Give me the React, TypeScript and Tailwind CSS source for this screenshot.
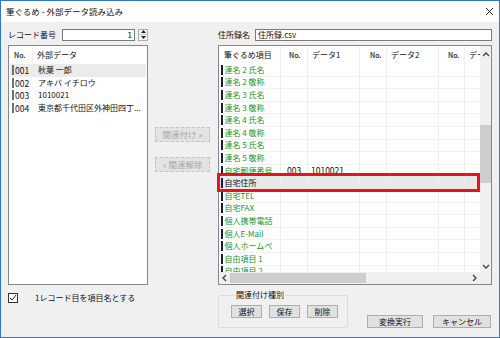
import React from 'react';

// 筆ぐるめ - 外部データ読み込み dialog

type Row = { name: string; no?: string; data?: string; selected?: boolean };

const LEFT_ROWS = [
  { no: '001', text: '秋葉 一郎', selected: true },
  { no: '002', text: 'アキバ イチロウ' },
  { no: '003', text: '1010021' },
  { no: '004', text: '東京都千代田区外神田四丁...' },
];

const RIGHT_ROWS: Row[] = [
  { name: '連名 2 氏名' },
  { name: '連名 2 敬称' },
  { name: '連名 3 氏名' },
  { name: '連名 3 敬称' },
  { name: '連名 4 氏名' },
  { name: '連名 4 敬称' },
  { name: '連名 5 氏名' },
  { name: '連名 5 敬称' },
  { name: '自宅郵便番号', no: '003', data: '1010021' },
  { name: '自宅住所', selected: true },
  { name: '自宅TEL' },
  { name: '自宅FAX' },
  { name: '個人携帯電話' },
  { name: '個人E-Mail' },
  { name: '個人ホームペ' },
  { name: '自由項目 1' },
  { name: '自由項目 2' },
];

function Chevron({ dir }: { dir: 'up' | 'down' | 'left' | 'right' }) {
  const pts = {
    up: '1,5 4,2 7,5',
    down: '1,2 4,5 7,2',
    left: '5,1 2,4 5,7',
    right: '2,1 5,4 2,7',
  }[dir];
  return (
    <svg width="8" height="8" viewBox="0 0 8 8">
      <polyline points={pts} fill="none" stroke="#404040" strokeWidth="1.3" />
    </svg>
  );
}

function Btn({ children, w, disabled }: { children: React.ReactNode; w: string; disabled?: boolean }) {
  return (
    <div
      className={
        disabled
          ? `${w} h-[15px] flex items-center justify-center border border-dashed border-[#c4c4c4] bg-[#e3e3e3] text-[#a8a8a8] text-[8.5px]`
          : `${w} h-[13px] flex items-center justify-center border border-[#adadad] bg-[#e1e1e1] text-[#111] text-[8px]`
      }
    >
      {children}
    </div>
  );
}

export default function App() {
  return (
    <div className="w-[500px] h-[338px] border border-[#2f78c4] bg-[#f0f0f0] flex flex-col overflow-hidden text-[#111] font-['Noto_Sans_CJK_JP',sans-serif] leading-none">
      {/* title bar */}
      <div className="h-[21px] bg-white flex items-center justify-between pl-[5px] pr-[5px] shrink-0">
        <span className="text-[8.5px]">筆ぐるめ - 外部データ読み込み</span>
        <svg width="9" height="9" viewBox="0 0 9 9">
          <path d="M1 1 L8 8 M8 1 L1 8" stroke="#222" strokeWidth="1" />
        </svg>
      </div>

      <div className="flex flex-row pl-[7px] pt-[6px] text-[8px]">
        {/* left column */}
        <div className="w-[140px] flex flex-col">
          <div className="h-[13px] flex items-center">
            <span className="w-[54px]">レコード番号</span>
            <div className="w-[73px] h-[12px] border border-[#7a7a7a] bg-white flex items-center justify-end pr-[2px]">1</div>
            <div className="ml-[3px] w-[10px] h-[12px] flex flex-col border border-[#adadad] bg-[#f5f5f5]">
              <div className="flex-1 flex items-center justify-center border-b border-[#c8c8c8]">
                <svg width="5" height="3" viewBox="0 0 5 3"><path d="M0 3 L2.5 0 L5 3 Z" fill="#222" /></svg>
              </div>
              <div className="flex-1 flex items-center justify-center">
                <svg width="5" height="3" viewBox="0 0 5 3"><path d="M0 0 L2.5 3 L5 0 Z" fill="#222" /></svg>
              </div>
            </div>
          </div>

          <div className="mt-[4px] h-[240px] border border-[#828790] bg-white flex flex-col">
            <div className="h-[18px] flex items-center shrink-0">
              <div className="w-[24px] pl-[5px] text-[7px] font-medium h-full flex items-center border-r border-[#eeeeee]">No.</div>
              <div className="pl-[4px]">外部データ</div>
            </div>
            {LEFT_ROWS.map((r) => (
              <div
                key={r.no}
                className={`h-[12.6px] mx-[1px] flex items-center ${r.selected ? 'bg-[#ebebeb]' : ''}`}
              >
                <div className="ml-[2px] w-[2px] h-[10px] bg-[#707070]" />
                <div className="w-[21px] pl-[1px] text-[8.5px]">{r.no}</div>
                <div className="pl-[3px] whitespace-nowrap">{r.text}</div>
              </div>
            ))}
          </div>

          <div className="mt-[8px] h-[10px] flex items-center">
            <div className="w-[10px] h-[10px] border border-[#333] bg-white flex items-center justify-center">
              <svg width="8" height="8" viewBox="0 0 8 8">
                <polyline points="1,4 3,6 7,1" fill="none" stroke="#222" strokeWidth="1" />
              </svg>
            </div>
            <span className="ml-[17px]">1レコード目を項目名とする</span>
          </div>
        </div>

        {/* middle buttons */}
        <div className="w-[56px] ml-[7px] flex flex-col pt-[99px] gap-[15px]">
          <Btn w="w-[55px]" disabled>関連付け »</Btn>
          <Btn w="w-[55px]" disabled>« 関連解除</Btn>
        </div>

        {/* right column */}
        <div className="w-[274px] ml-[7px] flex flex-col">
          <div className="h-[13px] flex items-center">
            <span className="w-[37px]">住所録名</span>
            <div className="flex-1 h-[12px] border border-[#7a7a7a] bg-white flex items-center pl-[2px]">住所録.csv</div>
          </div>

          <div className="relative mt-[4px] h-[240px] border border-[#828790] bg-white flex flex-col">
            <div className="flex flex-row h-[226px]">
              <div className="flex-1 overflow-hidden flex flex-col">
                <div className="h-[18px] flex items-center shrink-0 whitespace-nowrap">
                  <div className="w-[62px] shrink-0 h-full flex items-center pl-[5px] border-r border-[#eeeeee]">筆ぐるめ項目</div>
                  <div className="w-[27px] shrink-0 h-full flex items-center pl-[8px] border-r border-[#eeeeee] text-[7px] font-medium">No.</div>
                  <div className="w-[52px] shrink-0 h-full flex items-center pl-[4px] border-r border-[#eeeeee]">データ1</div>
                  <div className="w-[27px] shrink-0 h-full flex items-center pl-[10px] border-r border-[#eeeeee] text-[7px] font-medium">No.</div>
                  <div className="w-[52px] shrink-0 h-full flex items-center pl-[4px] border-r border-[#eeeeee]">データ2</div>
                  <div className="w-[26px] shrink-0 h-full flex items-center pl-[9px] border-r border-[#eeeeee] text-[7px] font-medium">No.</div>
                  <div className="w-[40px] shrink-0 h-full flex items-center pl-[4px]">データ3</div>
                </div>
                {RIGHT_ROWS.map((r) => (
                  <div
                    key={r.name}
                    className={`h-[12.6px] shrink-0 flex items-stretch whitespace-nowrap border-b border-[#f2f2f2] ${r.selected ? 'bg-[#e8e8e8]' : ''}`}
                  >
                    <div className={`w-[62px] shrink-0 flex items-center border-r border-[#eeeeee] ${r.selected ? 'text-[#111]' : 'text-[#269426]'}`}>
                      <div className="ml-[2px] w-[1.5px] h-[10px] bg-[#1c1c3a]" />
                      <span className="ml-[2px]">{r.name}</span>
                    </div>
                    <div className="w-[27px] shrink-0 flex items-center pl-[6px] border-r border-[#eeeeee] text-[8.5px]">{r.no}</div>
                    <div className="w-[52px] shrink-0 flex items-center pl-[3px] border-r border-[#eeeeee] text-[8.5px]">{r.data}</div>
                    <div className="w-[27px] shrink-0 border-r border-[#eeeeee]" />
                    <div className="w-[52px] shrink-0 border-r border-[#eeeeee]" />
                    <div className="w-[26px] shrink-0 border-r border-[#eeeeee]" />
                    <div className="w-[40px] shrink-0" />
                  </div>
                ))}
              </div>
              {/* vertical scrollbar */}
              <div className="w-[11px] bg-[#f0f0f0] flex flex-col">
                <div className="h-[17px] flex items-center justify-center"><Chevron dir="up" /></div>
                <div className="h-[62px]" />
                <div className="h-[58px] bg-[#cdcdcd]" />
                <div className="flex-1" />
                <div className="h-[11px] flex items-center justify-center"><Chevron dir="down" /></div>
              </div>
            </div>
            {/* horizontal scrollbar */}
            <div className="flex flex-row h-[12px]">
              <div className="flex-1 bg-[#f0f0f0] flex flex-row items-stretch">
                <div className="w-[11px] flex items-center justify-center"><Chevron dir="left" /></div>
                <div className="w-[136px] my-[1px] bg-[#cdcdcd]" />
                <div className="flex-1" />
                <div className="w-[11px] flex items-center justify-center"><Chevron dir="right" /></div>
              </div>
              <div className="w-[11px] bg-[#f0f0f0]" />
            </div>
            {/* highlight frame */}
            <div className="absolute left-[-2px] top-[127px] w-[263px] h-[19px] border-[3px] border-[#e8121a]" />
          </div>

          <div className="flex flex-row items-end mt-[5px]">
            <fieldset className="w-[130px] h-[38px] border border-[#dcdcdc] rounded-[2px] pl-[12px] pt-[5px]">
              <legend className="ml-[4px] px-[1px] text-[8px] leading-[10px]">関連付け種別</legend>
              <div className="flex flex-row gap-[7px]">
                <Btn w="w-[31px]">選択</Btn>
                <Btn w="w-[31px]">保存</Btn>
                <Btn w="w-[31px]">削除</Btn>
              </div>
            </fieldset>
            <div className="ml-auto mr-[1px] flex flex-row gap-[10px]">
              <Btn w="w-[56px]">変換実行</Btn>
              <Btn w="w-[58px]">キャンセル</Btn>
            </div>
          </div>
        </div>
      </div>
    </div>
  );
}
